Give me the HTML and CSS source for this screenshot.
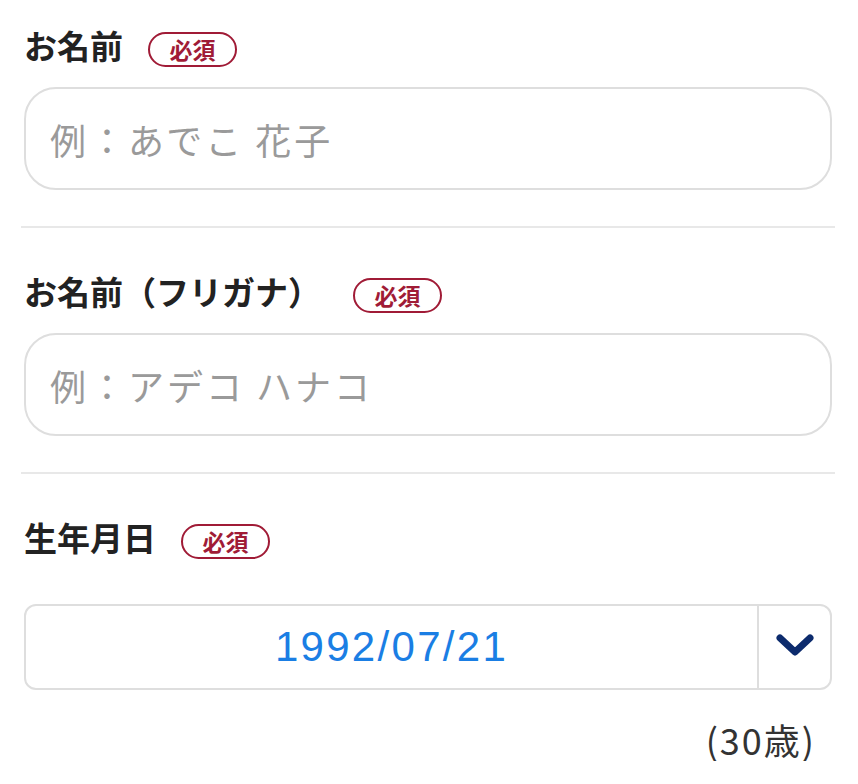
FILE: index.html
```html
<!DOCTYPE html>
<html lang="ja">
<head>
<meta charset="utf-8">
<link rel="stylesheet" href="styles.css">
</head>
<body>
<main class="form">
  <section class="field field-first">
    <div class="field-head">
      <span class="label">お名前</span>
      <span class="badge">必須</span>
    </div>
    <input class="text-input" type="text" placeholder="例：あでこ 花子">
  </section>
  <section class="field">
    <div class="field-head field-head-wide">
      <span class="label">お名前（フリガナ）</span>
      <span class="badge">必須</span>
    </div>
    <input class="text-input" type="text" placeholder="例：アデコ ハナコ">
  </section>
  <section class="field field-last">
    <div class="field-head">
      <span class="label">生年月日</span>
      <span class="badge">必須</span>
    </div>
    <div class="select">
      <div class="select-value">1992/07/21</div>
      <div class="select-arrow">
        <svg width="40" height="28" viewBox="0 0 40 28" aria-hidden="true">
          <path d="M5 5 L20 19 L35 5" fill="none" stroke="#0c2b6d" stroke-width="7" stroke-linecap="round" stroke-linejoin="round"/>
        </svg>
      </div>
    </div>
    <div class="age">(30歳)</div>
  </section>
</main>
</body>
</html>
```
FILE: styles.css
```css
* { box-sizing: border-box; }
html, body {
  margin: 0;
  padding: 0;
  background: #fff;
}
body {
  font-family: "Noto Sans CJK JP", "Noto Sans", sans-serif;
  color: #222;
}
.form {
  padding: 0 23px 0 21px;
}
.field {
  padding: 43px 3px 36px;
  border-bottom: 2px solid #e8e8e8;
}
.field-first {
  padding-top: 25px;
}
.field-last {
  border-bottom: none;
  padding-bottom: 0;
}
.field-head {
  display: flex;
  align-items: center;
  height: 40px;
  gap: 25px;
  margin-bottom: 22px;
}
.field-head-wide {
  gap: 32px;
}
.field-last .field-head {
  margin-bottom: 47px;
}
.label {
  font-size: 33px;
  line-height: 40px;
  font-weight: 700;
  color: #222;
}
.badge {
  display: inline-flex;
  align-items: center;
  justify-content: center;
  width: 89px;
  height: 35px;
  margin-top: 9px;
  border: 2px solid #a01b36;
  border-radius: 18px;
  color: #a01b36;
  font-size: 23px;
  font-weight: 700;
  line-height: 1;
}
.text-input {
  display: block;
  width: 100%;
  height: 103px;
  margin: 0;
  padding: 0 24px;
  border: 2px solid #dedede;
  border-radius: 32px;
  background: #fff;
  font-family: "Noto Sans CJK JP", "Noto Sans", sans-serif;
  font-size: 36px;
  letter-spacing: 3px;
  color: #222;
  outline: none;
}
.text-input::placeholder {
  color: #9a9a9a;
}
.select {
  display: flex;
  height: 86px;
  border: 2px solid #dedede;
  border-radius: 12px;
}
.select-value {
  flex: 1;
  display: flex;
  align-items: center;
  justify-content: center;
  font-family: "Liberation Sans", Arial, sans-serif;
  font-size: 42px;
  letter-spacing: 2.3px;
  color: #1a7ee4;
}
.select-arrow {
  width: 73px;
  border-left: 2px solid #dedede;
  display: flex;
  align-items: center;
  justify-content: center;
}
.age {
  margin-top: 27px;
  text-align: right;
  padding-right: 16px;
  font-size: 36px;
  letter-spacing: 2px;
  line-height: 44px;
  color: #333;
}
```
